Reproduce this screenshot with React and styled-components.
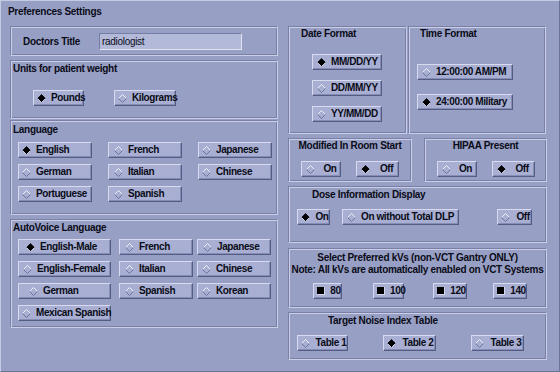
import React from "react";
import styled, { createGlobalStyle } from "styled-components";

const GlobalStyle = createGlobalStyle`
  html, body {
    margin: 0;
    padding: 0;
    background: #989fc4;
  }
  body {
    font-family: "Liberation Sans", Arial, sans-serif;
  }
`;

const Window = styled.div`
  box-sizing: border-box;
  width: 560px;
  height: 372px;
  padding: 5px 0 0 7px;
  background: #989fc4;
  border: 1px solid;
  border-color: #c6cae3 #6c7398 #6c7398 #c6cae3;
  font: bold 10px "Liberation Sans", Arial, sans-serif;
  letter-spacing: -0.3px;
  color: #0a0c18;
`;

const Title = styled.div`
  line-height: 12px;
  margin-bottom: 8px;
`;

const Columns = styled.div`
  display: flex;
  gap: 10px;
  padding-left: 2px;
`;

const Column = styled.div`
  display: flex;
  flex-direction: column;
  width: ${(p) => p.$w}px;
`;

const Panel = styled.div`
  box-sizing: border-box;
  width: ${(p) => (p.$w ? `${p.$w}px` : "auto")};
  height: ${(p) => p.$h}px;
  margin-top: ${(p) => p.$mt || 0}px;
  border: 1px solid;
  border-color: #7880a8 #cbcee5 #cbcee5 #7880a8;
  box-shadow: inset 1px 1px 0 #cbcee5, inset -1px -1px 0 #7880a8;
`;

const PanelTitle = styled.div`
  line-height: 12px;
  padding: ${(p) => p.$pad};
  text-align: ${(p) => (p.$center ? "center" : "left")};
`;

const FieldRow = styled.div`
  display: flex;
  align-items: center;
  height: 100%;
  padding-left: 12px;
`;

const FieldLabel = styled.div`
  width: 76px;
`;

const TextField = styled.div`
  box-sizing: border-box;
  width: 143px;
  height: 17px;
  padding-left: 2px;
  line-height: 15px;
  font-weight: normal;
  background: #b3b9d9;
  border: 1px solid;
  border-color: #767da5 #e0e3f2 #e0e3f2 #767da5;
`;

const ButtonRow = styled.div`
  display: flex;
  justify-content: ${(p) => (p.$center ? "center" : "flex-start")};
  gap: ${(p) => p.$gap || 0}px;
  margin-top: ${(p) => p.$mt}px;
  padding-left: ${(p) => p.$pl || 0}px;
`;

const ButtonStack = styled.div`
  display: flex;
  flex-direction: column;
  align-items: flex-start;
  gap: ${(p) => p.$gap}px;
  margin-top: ${(p) => p.$mt}px;
  padding-left: ${(p) => p.$pl}px;
`;

const ButtonGrid = styled.div`
  display: grid;
  grid-template-columns: ${(p) => p.$cols};
  row-gap: 6px;
  margin-top: ${(p) => p.$mt}px;
  padding-left: ${(p) => p.$pl}px;
`;

const Toggle = styled.div`
  box-sizing: border-box;
  display: flex;
  align-items: center;
  gap: 5px;
  width: ${(p) => p.$w}px;
  height: 16px;
  margin-left: ${(p) => p.$ml || 0}px;
  padding: 0 0 0 ${(p) => 3 + (p.$lead || 0)}px;
  background: #a9afd2;
  border: 1px solid;
  border-color: #d8dbef #555c83 #555c83 #d8dbef;
  box-shadow: inset -1px -1px 0 #868db5;
  white-space: nowrap;
  letter-spacing: -0.4px;
  svg {
    display: block;
    flex-shrink: 0;
  }
`;

const ToggleText = styled.span`
  flex: 1;
  line-height: 14px;
  text-align: ${(p) => (p.$left ? "left" : "center")};
`;

function Diamond({ on }) {
  return (
    <svg width="9" height="9" viewBox="0 0 9 9">
      <polygon points="4.5,0.5 8.5,4.5 4.5,8.5 0.5,4.5" fill={on ? "#000" : "#a9afd2"} />
      <polyline points="0.5,4.5 4.5,0.5 8.5,4.5" fill="none" stroke={on ? "#15161f" : "#eceef8"} />
      <polyline points="0.5,4.5 4.5,8.5 8.5,4.5" fill="none" stroke={on ? "#c9cce2" : "#6c739b"} />
    </svg>
  );
}

function Square() {
  return (
    <svg width="8" height="8" viewBox="0 0 8 8">
      <rect x="0" y="0" width="8" height="8" fill="#d3d6ec" />
      <rect x="0" y="0" width="7" height="7" fill="#000" />
    </svg>
  );
}

function Radio({ label, on, w, lead, left, ml }) {
  return (
    <Toggle $w={w} $lead={lead} $ml={ml}>
      <Diamond on={on} />
      <ToggleText $left={left}>{label}</ToggleText>
    </Toggle>
  );
}

function Check({ label, w }) {
  return (
    <Toggle $w={w}>
      <Square />
      <ToggleText>{label}</ToggleText>
    </Toggle>
  );
}

const languages = [
  { label: "English", on: true },
  { label: "French", lead: 2 },
  { label: "Japanese" },
  { label: "German" },
  { label: "Italian", lead: 2 },
  { label: "Chinese" },
  { label: "Portuguese" },
  { label: "Spanish", lead: 2 },
];

const voices = [
  { label: "English-Male", on: true, w: 93, lead: 4 },
  { label: "French", w: 74, lead: 2 },
  { label: "Japanese", w: 74, lead: 2 },
  { label: "English-Female", w: 93, lead: 1 },
  { label: "Italian", w: 74, lead: 2 },
  { label: "Chinese", w: 74, lead: 1 },
  { label: "German", w: 93, lead: 7 },
  { label: "Spanish", w: 74, lead: 2 },
  { label: "Korean", w: 74, lead: 1 },
  { label: "Mexican Spanish", w: 93 },
];

const kvs = [
  { label: "80", w: 29 },
  { label: "100", w: 31 },
  { label: "120", w: 34 },
  { label: "140", w: 34 },
];

export default function App() {
  return (
    <>
      <GlobalStyle />
      <Window>
        <Title>Preferences Settings</Title>
        <Columns>
          <Column $w={268}>
            <Panel $h={30}>
              <FieldRow>
                <FieldLabel>Doctors Title</FieldLabel>
                <TextField>radiologist</TextField>
              </FieldRow>
            </Panel>

            <Panel $h={59} $mt={4}>
              <PanelTitle $pad="2px 0 0 2px">Units for patient weight</PanelTitle>
              <ButtonRow $mt={15} $pl={22} $gap={30}>
                <Radio label="Pounds" on w={51} left />
                <Radio label="Kilograms" w={62} left />
              </ButtonRow>
            </Panel>

            <Panel $h={95} $mt={1}>
              <PanelTitle $pad="3px 0 0 2px">Language</PanelTitle>
              <ButtonGrid $cols="90px 90px 74px" $mt={6} $pl={7}>
                {languages.map((l) => (
                  <Radio key={l.label} label={l.label} on={l.on} w={74} lead={l.lead} left />
                ))}
              </ButtonGrid>
            </Panel>

            <Panel $h={109} $mt={4}>
              <PanelTitle $pad="2px 0 0 2px">AutoVoice Language</PanelTitle>
              <ButtonGrid $cols="101px 78px 74px" $mt={5} $pl={7}>
                {voices.map((v) => (
                  <Radio key={v.label} label={v.label} on={v.on} w={v.w} lead={v.lead} left />
                ))}
              </ButtonGrid>
            </Panel>
          </Column>

          <Column $w={259}>
            <ButtonRow $mt={0} $gap={1}>
              <Panel $w={119} $h={108}>
                <PanelTitle $pad="1px 0 0 12px">Date Format</PanelTitle>
                <ButtonStack $mt={14} $pl={23} $gap={10}>
                  <Radio label="MM/DD/YY" on w={70} lead={1} left />
                  <Radio label="DD/MM/YY" w={70} lead={1} left />
                  <Radio label="YY/MM/DD" w={70} lead={1} left />
                </ButtonStack>
              </Panel>
              <Panel $w={138} $h={108}>
                <PanelTitle $pad="1px 0 0 11px">Time Format</PanelTitle>
                <ButtonStack $mt={24} $pl={8} $gap={14}>
                  <Radio label="12:00:00 AM/PM" w={96} lead={1} left />
                  <Radio label="24:00:00 Military" on w={96} lead={1} left />
                </ButtonStack>
              </Panel>
            </ButtonRow>

            <ButtonRow $mt={4} $gap={12}>
              <Panel $w={124} $h={44}>
                <PanelTitle $pad="1px 0 0 0" $center>Modified In Room Start</PanelTitle>
                <ButtonRow $center $mt={9} $gap={15}>
                  <Radio label="On" w={40} lead={1} />
                  <Radio label="Off" on w={43} lead={1} />
                </ButtonRow>
              </Panel>
              <Panel $w={123} $h={44}>
                <PanelTitle $pad="1px 0 0 0" $center>HIPAA Present</PanelTitle>
                <ButtonRow $center $mt={9} $gap={15}>
                  <Radio label="On" w={40} lead={1} />
                  <Radio label="Off" on w={43} lead={1} />
                </ButtonRow>
              </Panel>
            </ButtonRow>

            <Panel $h={57} $mt={4}>
              <PanelTitle $pad="2px 0 0 23px">Dose Information Display</PanelTitle>
              <ButtonRow $mt={8} $pl={8}>
                <Radio label="On" on w={33} />
                <Radio label="On without Total DLP" w={117} lead={1} ml={12} left />
                <Radio label="Off" w={35} ml={38} />
              </ButtonRow>
            </Panel>

            <Panel $h={60} $mt={5}>
              <PanelTitle $pad="3px 0 0 0" $center>
                Select Preferred kVs (non-VCT Gantry ONLY)
                <br />
                Note: All kVs are automatically enabled on VCT Systems
              </PanelTitle>
              <ButtonGrid $cols="60px 60px 60px 60px" $mt={7} $pl={24}>
                {kvs.map((k) => (
                  <Check key={k.label} label={k.label} w={k.w} />
                ))}
              </ButtonGrid>
            </Panel>

            <Panel $h={48} $mt={4}>
              <PanelTitle $pad="2px 0 0 39px">Target Noise Index Table</PanelTitle>
              <ButtonRow $mt={8} $pl={8} $gap={35}>
                <Radio label="Table 1" w={51} />
                <Radio label="Table 2" on w={53} />
                <Radio label="Table 3" w={53} />
              </ButtonRow>
            </Panel>
          </Column>
        </Columns>
      </Window>
    </>
  );
}
